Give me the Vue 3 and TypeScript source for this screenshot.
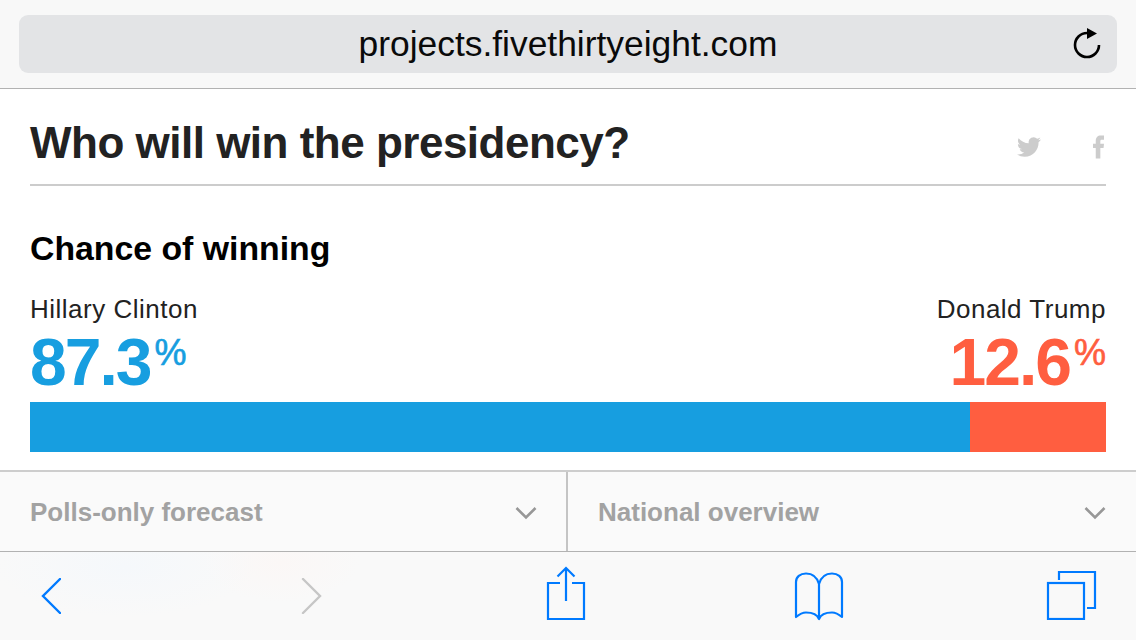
<script setup lang="ts">
const candidates = [
  { name: 'Hillary Clinton', pct: '87.3', tone: 'dem' },
  { name: 'Donald Trump', pct: '12.6', tone: 'rep' },
]
const filters = ['Polls-only forecast', 'National overview']
</script>

<template>
  <div class="screen">
    <header class="topbar">
      <div class="address">
        <span class="url">projects.fivethirtyeight.com</span>
        <svg class="reload" width="30" height="32" viewBox="0 0 30 32" fill="none">
          <path d="M15 6 A12 12 0 1 0 27 18" stroke="#000" stroke-width="2.600" />
          <path d="M15 1 L25 6.500 L15 12 Z" fill="#000" />
        </svg>
      </div>
    </header>

    <main class="page">
      <div class="headline">
        <h1>Who will win the presidency?</h1>
        <div class="social">
          <svg class="bird" width="24" height="20" viewBox="0 2 24 20" fill="#ccc">
            <path d="M23.953 4.570a10 10 0 01-2.825.775 4.958 4.958 0 002.163-2.723c-.951.555-2.005.959-3.127 1.184a4.920 4.920 0 00-8.384 4.482C7.690 8.095 4.067 6.130 1.640 3.162a4.822 4.822 0 00-.666 2.475c0 1.710.870 3.213 2.188 4.096a4.904 4.904 0 01-2.228-.616v.060a4.923 4.923 0 003.946 4.827 4.996 4.996 0 01-2.212.085 4.936 4.936 0 004.604 3.417 9.867 9.867 0 01-6.102 2.105c-.390 0-.779-.023-1.170-.067a13.995 13.995 0 007.557 2.209c9.053 0 13.998-7.496 13.998-13.985 0-.210 0-.420-.015-.630A9.935 9.935 0 0024 4.590z" />
          </svg>
          <svg class="fb" width="11" height="24" viewBox="0 0 12 25" fill="#ccc">
            <path d="M3 25V13.500H0V9h3V6c0-3.800 2-6 5.500-6H12v4.500H9.500C8.200 4.500 8 5 8 6.300V9h4L11.500 13.500H8V25z" />
          </svg>
        </div>
      </div>

      <h2>Chance of winning</h2>

      <div class="odds">
        <div v-for="c in candidates" :key="c.name" class="candidate" :class="c.tone">
          <div class="name">{{ c.name }}</div>
          <div class="pct">{{ c.pct }}<span class="sign">%</span></div>
        </div>
      </div>

      <div class="bar">
        <div class="bar-dem"></div>
        <div class="bar-rep"></div>
      </div>
    </main>

    <nav class="filters">
      <div v-for="f in filters" :key="f" class="filter">
        <span>{{ f }}</span>
        <svg width="22" height="14" viewBox="0 0 22 14" fill="none">
          <path d="M1.500 2 L11 11.500 L20.500 2" stroke="#979797" stroke-width="2.600" />
        </svg>
      </div>
    </nav>

    <footer class="toolbar">
      <svg class="back" width="22" height="36" viewBox="0 0 22 36" fill="none">
        <path d="M21 1 L4 18 L21 35" stroke="#007aff" stroke-width="2.400" stroke-linecap="round" />
      </svg>
      <svg class="forward" width="22" height="36" viewBox="0 0 22 36" fill="none">
        <path d="M3 1 L20 18 L3 35" stroke="#c6c6c6" stroke-width="2.400" stroke-linecap="round" />
      </svg>
      <svg class="share" width="40" height="54" viewBox="0 0 40 54" fill="none" stroke="#007aff" stroke-width="2.200">
        <path d="M14 17 H2 V53 H38 V17 H26" />
        <path d="M20 2 V35 M11.500 10.500 L20 2 L28.500 10.500" />
      </svg>
      <svg class="book" width="52" height="50" viewBox="0 0 52 50" fill="none" stroke="#007aff" stroke-width="2.200" stroke-linejoin="round">
        <path d="M3 46 V11 C3 6 7 2.500 13 2.500 C19 2.500 24 6 26 13 C28 6 33 2.500 39 2.500 C45 2.500 49 6 49 11 V46 C46 43.500 43 41.500 39 41.500 C33 41.500 28 43 26 48 C24 43 19 41.500 13 41.500 C9 41.500 6 43.500 3 46 Z M26 13 V47" />
      </svg>
      <svg class="tabs" width="52" height="50" viewBox="0 0 52 50" fill="none" stroke="#007aff" stroke-width="2.200">
        <rect x="2" y="13" width="36" height="36" />
        <path d="M13 10 V2 H49 V38 H41" />
      </svg>
    </footer>
  </div>
</template>

<style scoped>
.screen {
  width: 1136px;
  height: 640px;
  overflow: hidden;
  display: flex;
  flex-direction: column;
  background: #fff;
  font-family: "Liberation Sans", Arial, sans-serif;
}

.topbar {
  box-sizing: border-box;
  height: 89px;
  padding: 15px 19px 0;
  background: #f8f8f8;
  border-bottom: 1px solid #b2b2b2;
}

.address {
  position: relative;
  height: 58px;
  border-radius: 9px;
  background: #e3e4e6;
  display: flex;
  align-items: center;
  justify-content: center;
}

.url {
  font-size: 35.400px;
  color: #0a0a0a;
}

.reload {
  position: absolute;
  right: 15px;
  top: 12px;
}

.page {
  height: 381px;
  box-sizing: border-box;
  padding: 0 30px;
  color: #222;
}

.headline {
  height: 97px;
  box-sizing: border-box;
  border-bottom: 2px solid #ccc;
  display: flex;
  align-items: center;
  justify-content: space-between;
  padding-top: 13px;
}

h1 {
  margin: 0;
  font-size: 44px;
  line-height: 52px;
  font-weight: 700;
  letter-spacing: -0.500px;
}

.social {
  display: flex;
  align-items: center;
  gap: 52px;
  padding: 6px 2px 0 0;
}

.bird {
  margin-top: 2px;
}

.fb {
  margin-top: 2px;
}

h2 {
  margin: 42px 0 0;
  font-size: 33.800px;
  line-height: 40px;
  font-weight: 700;
  color: #000;
}

.odds {
  display: flex;
  justify-content: space-between;
  margin-top: 26px;
}

.candidate.rep {
  text-align: right;
}

.name {
  font-size: 26px;
  line-height: 30px;
  letter-spacing: 0.500px;
}

.pct {
  font-size: 66px;
  line-height: 66px;
  font-weight: 700;
  letter-spacing: -2px;
  margin-top: 5px;
}

.sign {
  font-size: 36px;
  font-weight: 400;
  letter-spacing: 0;
  vertical-align: 20px;
  line-height: 0;
  margin-left: 4px;
  -webkit-text-stroke: 0.600px currentColor;
}

.dem .pct {
  color: #179ee0;
}

.rep .pct {
  color: #ff5e40;
}

.bar {
  display: flex;
  height: 50px;
  margin-top: 7px;
}

.bar-dem {
  flex: 0 0 940px;
  background: #179ee0;
}

.bar-rep {
  flex: 1;
  background: #ff5e40;
}

.filters {
  display: flex;
  box-sizing: border-box;
  height: 82px;
  background: #fafafa;
  border-top: 2px solid #cdcdcd;
  border-bottom: 1px solid #b2b2b2;
}

.filter {
  flex: 1;
  box-sizing: border-box;
  display: flex;
  align-items: center;
  justify-content: space-between;
  padding: 2px 30px 0;
  font-size: 26px;
  font-weight: 700;
  color: #a2a2a2;
}

.filter:first-child {
  flex: 0 0 568px;
  padding-right: 29px;
  border-right: 2px solid #c4c4c4;
}

.toolbar {
  flex: 1;
  display: flex;
  align-items: flex-start;
  padding-left: 39px;
  background:
    radial-gradient(ellipse 130px 50px at 125px 15px, #f5f8fb, rgba(249, 249, 249, 0)),
    radial-gradient(ellipse 80px 40px at 280px 10px, #fbf7f6, rgba(249, 249, 249, 0)),
    #f9f9f9;
}

.back {
  margin-top: 26px;
}

.forward {
  margin: 26px 0 0 239px;
}

.share {
  margin: 14px 0 0 224px;
}

.book {
  margin: 19px 0 0 207px;
}

.tabs {
  margin: 18px 0 0 201px;
}
</style>
